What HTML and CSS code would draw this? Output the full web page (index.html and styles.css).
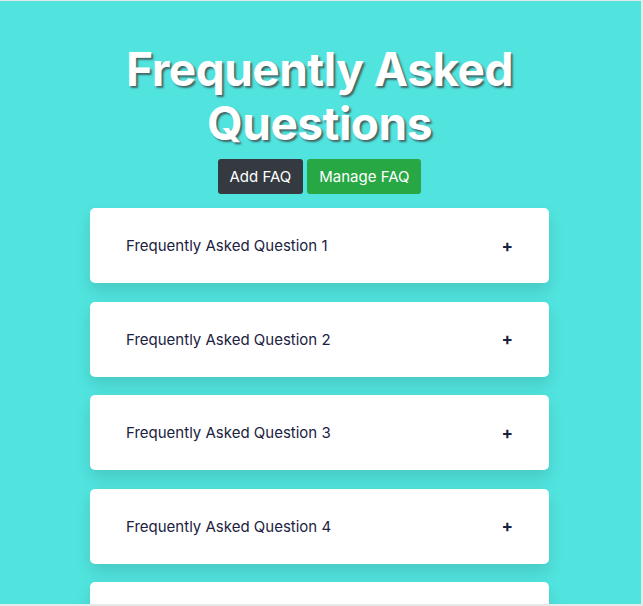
FILE: index.html
```html
<!DOCTYPE html>
<html>
<head>
<meta charset="utf-8">
<link rel="stylesheet" href="styles.css">
</head>
<body>
<main class="page">
  <h1 class="title">Frequently Asked Questions</h1>
  <div class="actions">
    <button class="btn btn-dark">Add FAQ</button>
    <button class="btn btn-green">Manage FAQ</button>
  </div>
  <div class="faq-list">
    <div class="faq-item"><span class="q">Frequently Asked Question 1</span><span class="plus">+</span></div>
    <div class="faq-item"><span class="q">Frequently Asked Question 2</span><span class="plus">+</span></div>
    <div class="faq-item"><span class="q">Frequently Asked Question 3</span><span class="plus">+</span></div>
    <div class="faq-item"><span class="q">Frequently Asked Question 4</span><span class="plus">+</span></div>
    <div class="faq-item"><span class="q">Frequently Asked Question 5</span><span class="plus">+</span></div>
  </div>
</main>
</body>
</html>
```

FILE: styles.css
```css
html, body {
  margin: 0;
  padding: 0;
  height: 100%;
  overflow: hidden;
}
body {
  background: #51e4df;
  font-family: Inter, "Open Sans", sans-serif;
  border-top: 1px solid #e4e9ea;
  border-right: 2px solid #e4e9ea;
  border-bottom: 2px solid #e4e9ea;
  box-sizing: border-box;
}
.page {
  display: flex;
  flex-direction: column;
  align-items: center;
  padding-top: 41px;
  padding-right: 2px;
}
.title {
  margin: 0;
  width: 440px;
  text-align: center;
  color: #fff;
  font-size: 46px;
  line-height: 54px;
  font-weight: 700;
  letter-spacing: -0.5px;
  text-shadow: 2px 2px 2px rgba(60, 60, 60, 0.75);
}
.actions {
  display: flex;
  gap: 4px;
  margin-top: 9px;
}
.btn {
  border: none;
  border-radius: 3px;
  color: #fff;
  font-family: Inter, sans-serif;
  font-size: 15px;
  height: 35px;
  padding: 0 12px;
}
.btn-dark { background: #343a40; }
.btn-green { background: #28a745; }
.faq-list {
  display: flex;
  flex-direction: column;
  gap: 18.5px;
  margin-top: 14px;
  width: 459px;
}
.faq-item {
  background: #fff;
  border-radius: 5px;
  height: 75px;
  flex: none;
  display: flex;
  align-items: center;
  justify-content: space-between;
  padding: 0 36px;
  box-sizing: border-box;
  box-shadow: 0 8px 16px rgba(0, 0, 0, 0.12);
  color: #1b2240;
}
.q {
  font-size: 15px;
}
.plus {
  font-size: 17px;
  font-weight: 700;
}
```
